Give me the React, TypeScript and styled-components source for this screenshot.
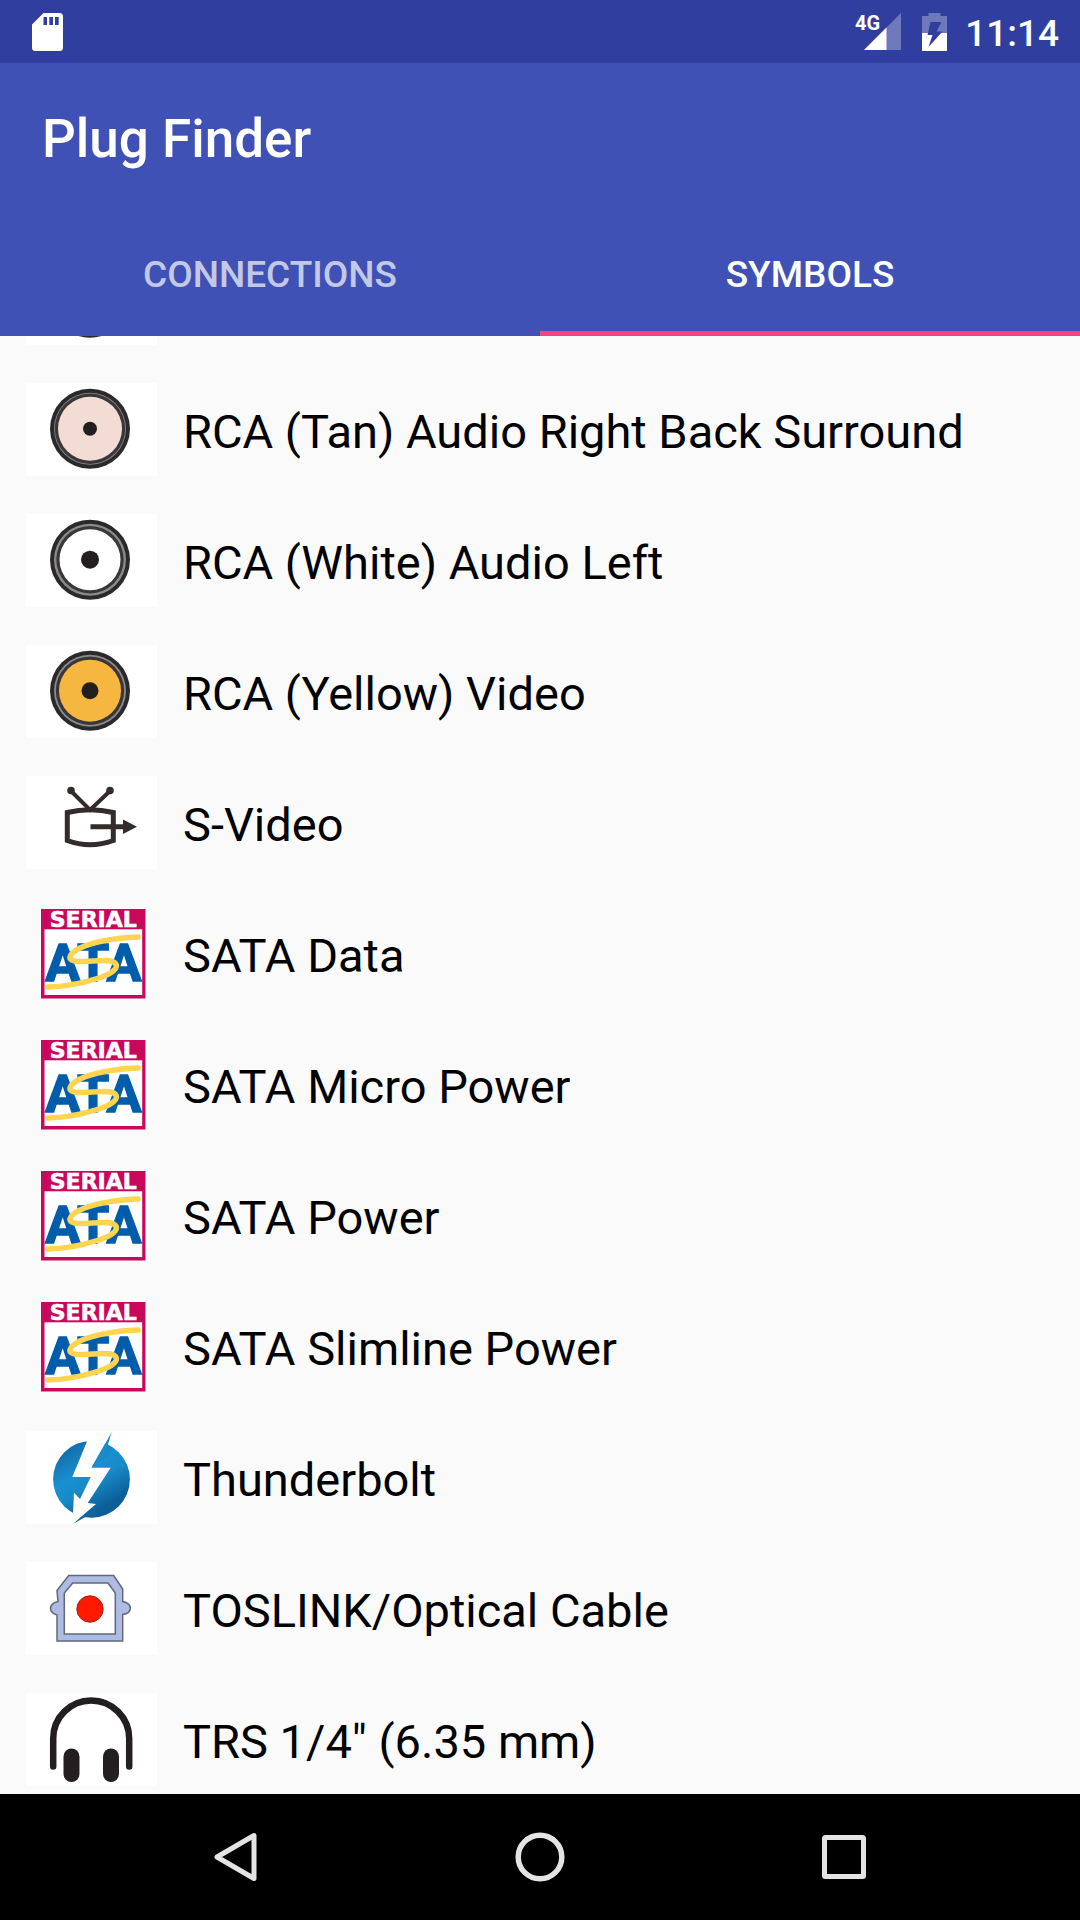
import React, { useLayoutEffect, useRef, useState } from "react";
import styled, { createGlobalStyle } from "styled-components";

const GlobalStyle = createGlobalStyle`
  * { box-sizing: border-box; }
  body { margin: 0; background: #fafafa; }
  button { font: inherit; color: inherit; border: 0; padding: 0; background: none; cursor: pointer; }
`;

const Screen = styled.div`
  display: flex;
  flex-direction: column;
  height: 100vh;
  background: #fafafa;
  color: #000;
  font-family: Roboto, "Noto Sans", sans-serif;
`;

const StatusBar = styled.div`
  flex: none;
  display: flex;
  align-items: center;
  justify-content: space-between;
  height: 63px;
  padding: 0 21px 0 32px;
  background: #303f9f;
  color: #fff;
`;

const StatusGroup = styled.div`
  display: flex;
  align-items: center;
`;

const Network = styled.div`
  display: flex;
  margin-right: 21px;
`;

const NetworkLabel = styled.span`
  align-self: flex-start;
  margin-right: -16px;
  font-size: 20px;
  line-height: 20px;
  font-weight: 700;
`;

const Clock = styled.time`
  margin-left: 18px;
  padding-top: 4px;
  font-size: 37px;
  line-height: 44px;
  font-weight: 500;
`;

const Header = styled.header`
  flex: none;
  background: #3f51b5;
  color: #fff;
`;

const Title = styled.h1`
  margin: 0;
  padding: 6px 42px 0;
  font-size: 53px;
  line-height: 141px;
  font-weight: 500;
`;

const Tabs = styled.div`
  display: grid;
  grid-template-columns: 1fr 1fr;
`;

const Tab = styled.button<{ $active: boolean }>`
  && {
    height: 126px;
    padding-top: 4px;
    font-size: 37px;
    line-height: 44px;
    font-weight: 500;
    color: ${(p) => (p.$active ? "#fff" : "rgba(255, 255, 255, 0.7)")};
    box-shadow: ${(p) => (p.$active ? "inset 0 -5px 0 #ff4081" : "none")};
  }
`;

const List = styled.ul`
  flex: 1;
  min-height: 0;
  margin: 0;
  padding: 0;
  list-style: none;
  overflow-y: auto;
  scrollbar-width: none;
`;

const Row = styled.button`
  && {
    display: flex;
    align-items: center;
    gap: 26px;
    width: 100%;
    height: 131px;
    padding: 0 26px;
    text-align: left;
  }
`;

const Thumb = styled.span<{ $plain?: boolean }>`
  flex: none;
  display: flex;
  width: 131px;
  height: 93px;
  background: ${(p) => (p.$plain ? "transparent" : "#fff")};
`;

const Label = styled.span`
  padding-top: 4px;
  font-size: 47px;
  line-height: 56px;
`;

const NavBar = styled.nav`
  flex: none;
  display: flex;
  justify-content: center;
  gap: 178px;
  height: 126px;
  background: #000;
`;

const NavButton = styled.button`
  && {
    display: flex;
    align-items: center;
    justify-content: center;
    width: 126px;
  }
`;

const Drawing = styled.svg`
  overflow: visible;
`;

const Art = ({ children }: { children: React.ReactNode }) => (
  <Drawing width="131" height="93" viewBox="0 0 131 93" fill="none" aria-hidden="true">
    {children}
  </Drawing>
);

const Rca = ({ color, inner = 30.5, dot = 9 }: { color: string; inner?: number; dot?: number }) => (
  <Art>
    <circle cx="64" cy="45.7" r="40" fill="#2b292a" />
    <circle cx="64" cy="45.7" r="36" fill="#8b8a8c" />
    <circle cx="64" cy="45.7" r={inner + 3.2} fill="#39373a" />
    <circle cx="64" cy="45.7" r={inner} fill={color} />
    <circle cx="64" cy="45.7" r={dot} fill="#231f20" />
  </Art>
);

const SVideo = () => (
  <Art>
    <g stroke="#332c2a" strokeWidth="5">
      <path d="M45 15 64 34 84 15" strokeWidth="4" />
      <path d="M41.3 36.5Q64 31 87.3 36.5V64.5Q64 73 41.3 64.5Z" />
      <path d="M64.5 50.7H98" />
    </g>
    <g fill="#332c2a">
      <circle cx="45" cy="14.500" r="3.800" />
      <circle cx="84" cy="14.500" r="3.800" />
      <path d="M97 43.500 111 50.700 97 58Z" />
    </g>
  </Art>
);

const Sata = () => (
  <Art>
    <rect x="15" y="2" width="104.500" height="89.500" fill="#c8085a" />
    <rect x="18.500" y="22.300" width="97.700" height="65.700" fill="#fff" />
    <text x="67.300" y="20" textAnchor="middle" fontFamily="DejaVu Sans, sans-serif" fontWeight="700" fontSize="22" fill="#fff" stroke="#fff" strokeWidth="0.600">
      SERIAL
    </text>
    <text x="67.300" y="74" textAnchor="middle" fontFamily="Roboto, sans-serif" fontWeight="700" fontSize="52" fill="#005dab" stroke="#005dab" strokeWidth="1.500">
      ATA
    </text>
    <path
      d="M112 30C90 31 67 35 54 41C42 47 40 54 52 54.500C65 55 84 51 89 56C94 61 85 67 73 71C57 76 38 80 22 80"
      stroke="#ffd44f"
      strokeWidth="5.500"
      strokeLinecap="round"
    />
  </Art>
);

const Thunderbolt = () => (
  <Art>
    <defs>
      <linearGradient id="bolt-blue" x1="40" y1="12" x2="86" y2="86" gradientUnits="userSpaceOnUse">
        <stop offset="0" stopColor="#1068a2" />
        <stop offset="0.380" stopColor="#1a90d0" />
        <stop offset="0.550" stopColor="#188ac8" />
        <stop offset="0.850" stopColor="#0c5f99" />
      </linearGradient>
    </defs>
    <circle cx="65.500" cy="48.300" r="38.400" fill="url(#bolt-blue)" />
    <path d="M85.700 0.700 82 13.500 84 24 66 36Z" fill="#1a8ac8" />
    <path d="M46.700 93 59 86.300 70 84V72Z" fill="#0f65a1" />
    <path
      d="M62 8 46.300 46H64.700L54 68 48 61.700 47 82.300 46.700 93 70 73 61.700 72 84.700 36.700H65.300L85.700 0.700H62Z"
      fill="#fff"
    />
  </Art>
);

const Toslink = () => (
  <Art>
    <path
      fillRule="evenodd"
      d="M42.700 13.500H87.700L96.700 27V39.500Q104.300 41 104.300 46.300T96.700 52.500V79H31V53Q24.500 51 24.500 46.300T32 39.500L31 28.500ZM46.700 21 38.300 31V72H89.300V31L82 21Z"
      fill="#aebce3"
      stroke="#62687a"
      strokeWidth="1.500"
    />
    <circle cx="64" cy="47" r="13.200" fill="#ff1a00" stroke="#a02018" strokeWidth="1" />
  </Art>
);

const Headphones = () => (
  <Art>
    <path d="M27.200 73.500V45.500A38 38 0 0 1 103.200 45.500V73.500" stroke="#231f20" strokeWidth="6.500" strokeLinecap="round" />
    <rect x="37.500" y="55.500" width="16" height="33.500" rx="8" fill="#231f20" />
    <rect x="77" y="55.500" width="16" height="33.500" rx="8" fill="#231f20" />
  </Art>
);

const symbols: { label?: string; art: React.ReactNode; plain?: boolean }[] = [
  { art: <Rca color="#fff" /> },
  { label: "RCA (Tan) Audio Right Back Surround", art: <Rca color="#f2dcd4" inner={32} dot={7} /> },
  { label: "RCA (White) Audio Left", art: <Rca color="#fff" /> },
  { label: "RCA (Yellow) Video", art: <Rca color="#f6b740" inner={31} dot={8.5} /> },
  { label: "S-Video", art: <SVideo /> },
  { label: "SATA Data", art: <Sata />, plain: true },
  { label: "SATA Micro Power", art: <Sata />, plain: true },
  { label: "SATA Power", art: <Sata />, plain: true },
  { label: "SATA Slimline Power", art: <Sata />, plain: true },
  { label: "Thunderbolt", art: <Thunderbolt /> },
  { label: "TOSLINK/Optical Cable", art: <Toslink /> },
  { label: 'TRS 1/4" (6.35 mm)', art: <Headphones /> },
];

const tabs = ["CONNECTIONS", "SYMBOLS"];

export default function App() {
  const [active, setActive] = useState(1);
  const listRef = useRef<HTMLUListElement>(null);

  useLayoutEffect(() => {
    if (listRef.current) listRef.current.scrollTop = 103;
  }, []);

  return (
    <Screen>
      <GlobalStyle />
      <StatusBar>
        <svg width="31" height="38" viewBox="0 0 31 38" aria-hidden="true">
          <path
            fillRule="evenodd"
            d="M11.500 0H27.500Q31 0 31 3.500V34.500Q31 38 27.500 38H3.500Q0 38 0 34.500V11.500ZM11.500 4V12H15V4ZM17.300 4V12H21V4ZM23 4V12H26.700V4Z"
            fill="#fff"
          />
        </svg>
        <StatusGroup>
          <Network>
            <NetworkLabel>4G</NetworkLabel>
            <svg width="37" height="37" viewBox="0 0 37 37" aria-hidden="true">
              <path d="M37 0V37H0Z" fill="#fff" opacity="0.300" />
              <path d="M22.500 14.500V37H0Z" fill="#fff" />
            </svg>
          </Network>
          <svg width="25" height="38" viewBox="0 0 25 38" aria-hidden="true">
            <path d="M6.500 0H18.500V3H25V20H0V3H6.500Z" fill="#fff" opacity="0.300" />
            <path d="M0 20H25V38H0Z" fill="#fff" />
            <path d="M8.500 9H19.500L14.500 18.500H20.500L6.500 34 10.500 22H5.500Z" fill="#303f9f" />
          </svg>
          <Clock>11:14</Clock>
        </StatusGroup>
      </StatusBar>
      <Header>
        <Title>Plug Finder</Title>
        <Tabs role="tablist">
          {tabs.map((name, i) => (
            <Tab key={name} role="tab" aria-selected={i === active} $active={i === active} onClick={() => setActive(i)}>
              {name}
            </Tab>
          ))}
        </Tabs>
      </Header>
      <List ref={listRef}>
        {symbols.map((s, i) => (
          <li key={i}>
            <Row>
              <Thumb $plain={s.plain}>{s.art}</Thumb>
              {s.label && <Label>{s.label}</Label>}
            </Row>
          </li>
        ))}
      </List>
      <NavBar>
        <NavButton aria-label="Back">
          <svg width="50" height="50" viewBox="0 0 50 50" fill="none" aria-hidden="true">
            <path d="M43 3.500V46.500L6 25Z" stroke="#e4e4e4" strokeWidth="5" strokeLinejoin="round" />
          </svg>
        </NavButton>
        <NavButton aria-label="Home">
          <svg width="50" height="50" viewBox="0 0 50 50" fill="none" aria-hidden="true">
            <circle cx="25" cy="25" r="21.800" stroke="#e4e4e4" strokeWidth="5.500" />
          </svg>
        </NavButton>
        <NavButton aria-label="Recent apps">
          <svg width="50" height="50" viewBox="0 0 50 50" fill="none" aria-hidden="true">
            <rect x="5.500" y="5.500" width="39" height="39" rx="1" stroke="#e4e4e4" strokeWidth="5" />
          </svg>
        </NavButton>
      </NavBar>
    </Screen>
  );
}
